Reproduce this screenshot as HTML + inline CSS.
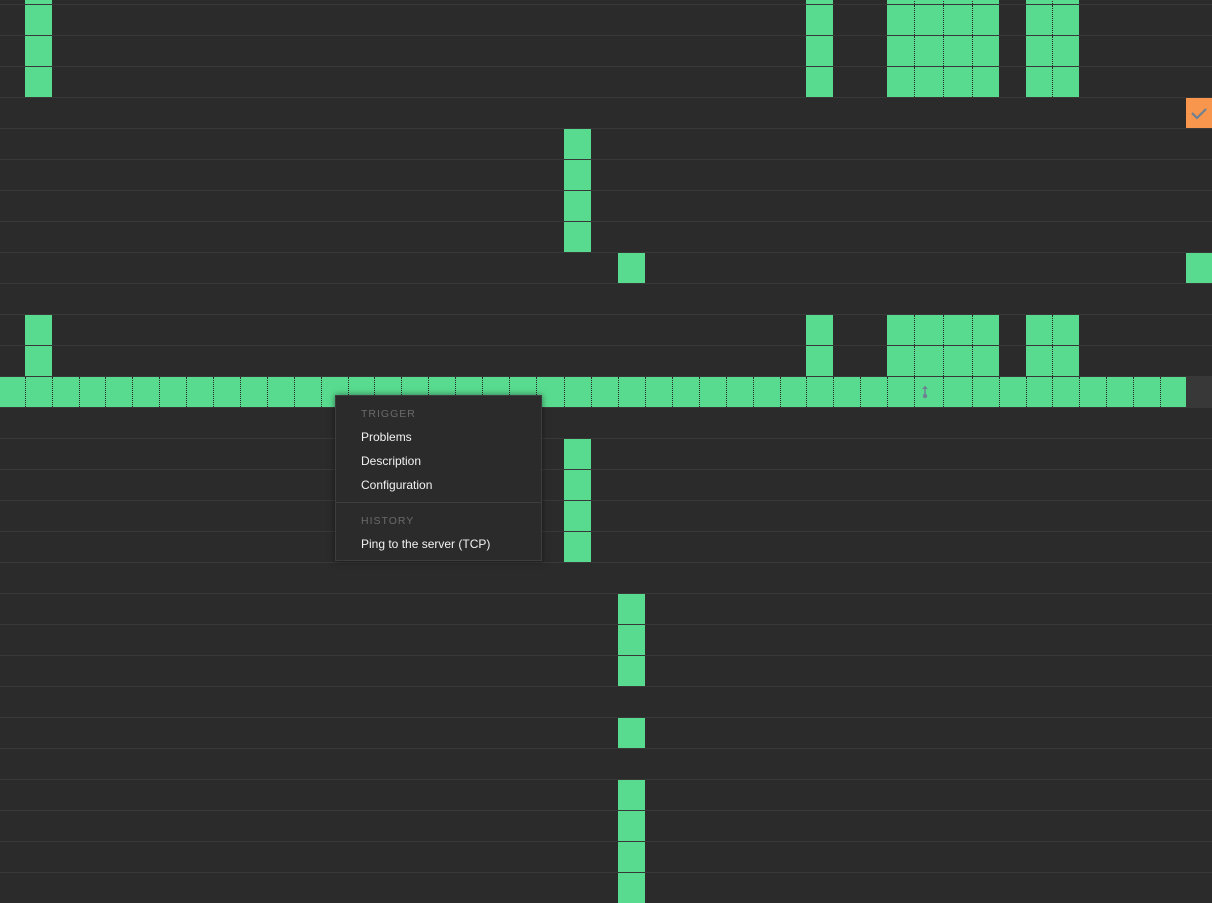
<!DOCTYPE html>
<html><head><meta charset="utf-8"><style>
html,body{margin:0;padding:0;background:#2b2b2b;width:1212px;height:901px;overflow:hidden;font-family:"Liberation Sans",Arial,sans-serif}
.l{position:absolute;left:0;width:1212px;height:1px;background:#383838}
.c{position:absolute;background:#59db8f;box-sizing:border-box}
.d{border-left:1px dotted #2b2b2b}
#m{position:absolute;left:335px;top:395px;width:207px;height:166px;background:#2b2b2b;border:1px solid #3d3d3d;box-sizing:border-box;box-shadow:0 0 6px rgba(0,0,0,.5)}
#m div{position:absolute;left:25px;font-size:12px;color:#f2f2f2}
#m .h{font-size:10.5px;color:#6a6a6a;letter-spacing:1px}
</style></head><body>
<div id="g"></div>
<div id="m">
<div class="h" style="top:12px">TRIGGER</div>
<div style="top:34px">Problems</div>
<div style="top:58px">Description</div>
<div style="top:82px">Configuration</div>
<div style="position:absolute;left:0;top:106px;width:205px;height:1px;background:#3d3d3d"></div>
<div class="h" style="top:119px">HISTORY</div>
<div style="top:141px">Ping to the server (TCP)</div>
</div>
<script>
var B=[0,25,52,79,105,132,159,186,213,240,267,294,321,348,374,401,428,455,482,509,536,564,591,618,645,672,699,726,753,780,806,833,860,887,914,943,972,999,1026,1052,1079,1106,1133,1160,1186,1212];
var g=document.getElementById('g'),h='';
for(var y=4;y<901;y+=31)h+='<div class="l" style="top:'+y+'px"></div>';
function col(x){return B.indexOf(x);}
function cells(r,list,color){var top=5+31*r,ht=30;if(r<0){top=-26;}
 var prev=-2;list.forEach(function(x){var i=col(x);var cls='c'+(i==prev+1?' d':'');
 h+='<div class="'+cls+'" style="left:'+B[i]+'px;width:'+(B[i+1]-B[i])+'px;top:'+top+'px;height:'+ht+'px'+(color?';background:'+color:'')+'"></div>';prev=i;});}
var P=[25,806,887,914,943,972,1026,1052];
[-1,0,1,2,10,11].forEach(function(r){cells(r,P)});
[4,5,6,7,14,15,16,17].forEach(function(r){cells(r,[564])});
cells(8,[618,1186]);
[19,20,21,23,25,26,27,28].forEach(function(r){cells(r,[618])});
var all=[];for(var i=0;i<44;i++)all.push(B[i]);cells(12,all);
h+='<div style="position:absolute;left:1186px;top:377px;width:26px;height:30px;background:#383838"></div>';
h+='<div style="position:absolute;left:1186px;top:98px;width:26px;height:30px;background:#f7964c"><svg width="26" height="30"><path d="M6 15l5 5 9-9" stroke="#6e8192" stroke-width="2.2" fill="none"/></svg></div>';
h+='<svg style="position:absolute;left:919px;top:384px" width="12" height="16"><path d="M6 2v10" stroke="#6e8192" stroke-width="1.5"/><path d="M3 5l3-3 3 3" fill="#6e8192"/><circle cx="6" cy="12" r="2.2" fill="#6e8192"/></svg>';
g.innerHTML=h;
</script>
</body></html>
